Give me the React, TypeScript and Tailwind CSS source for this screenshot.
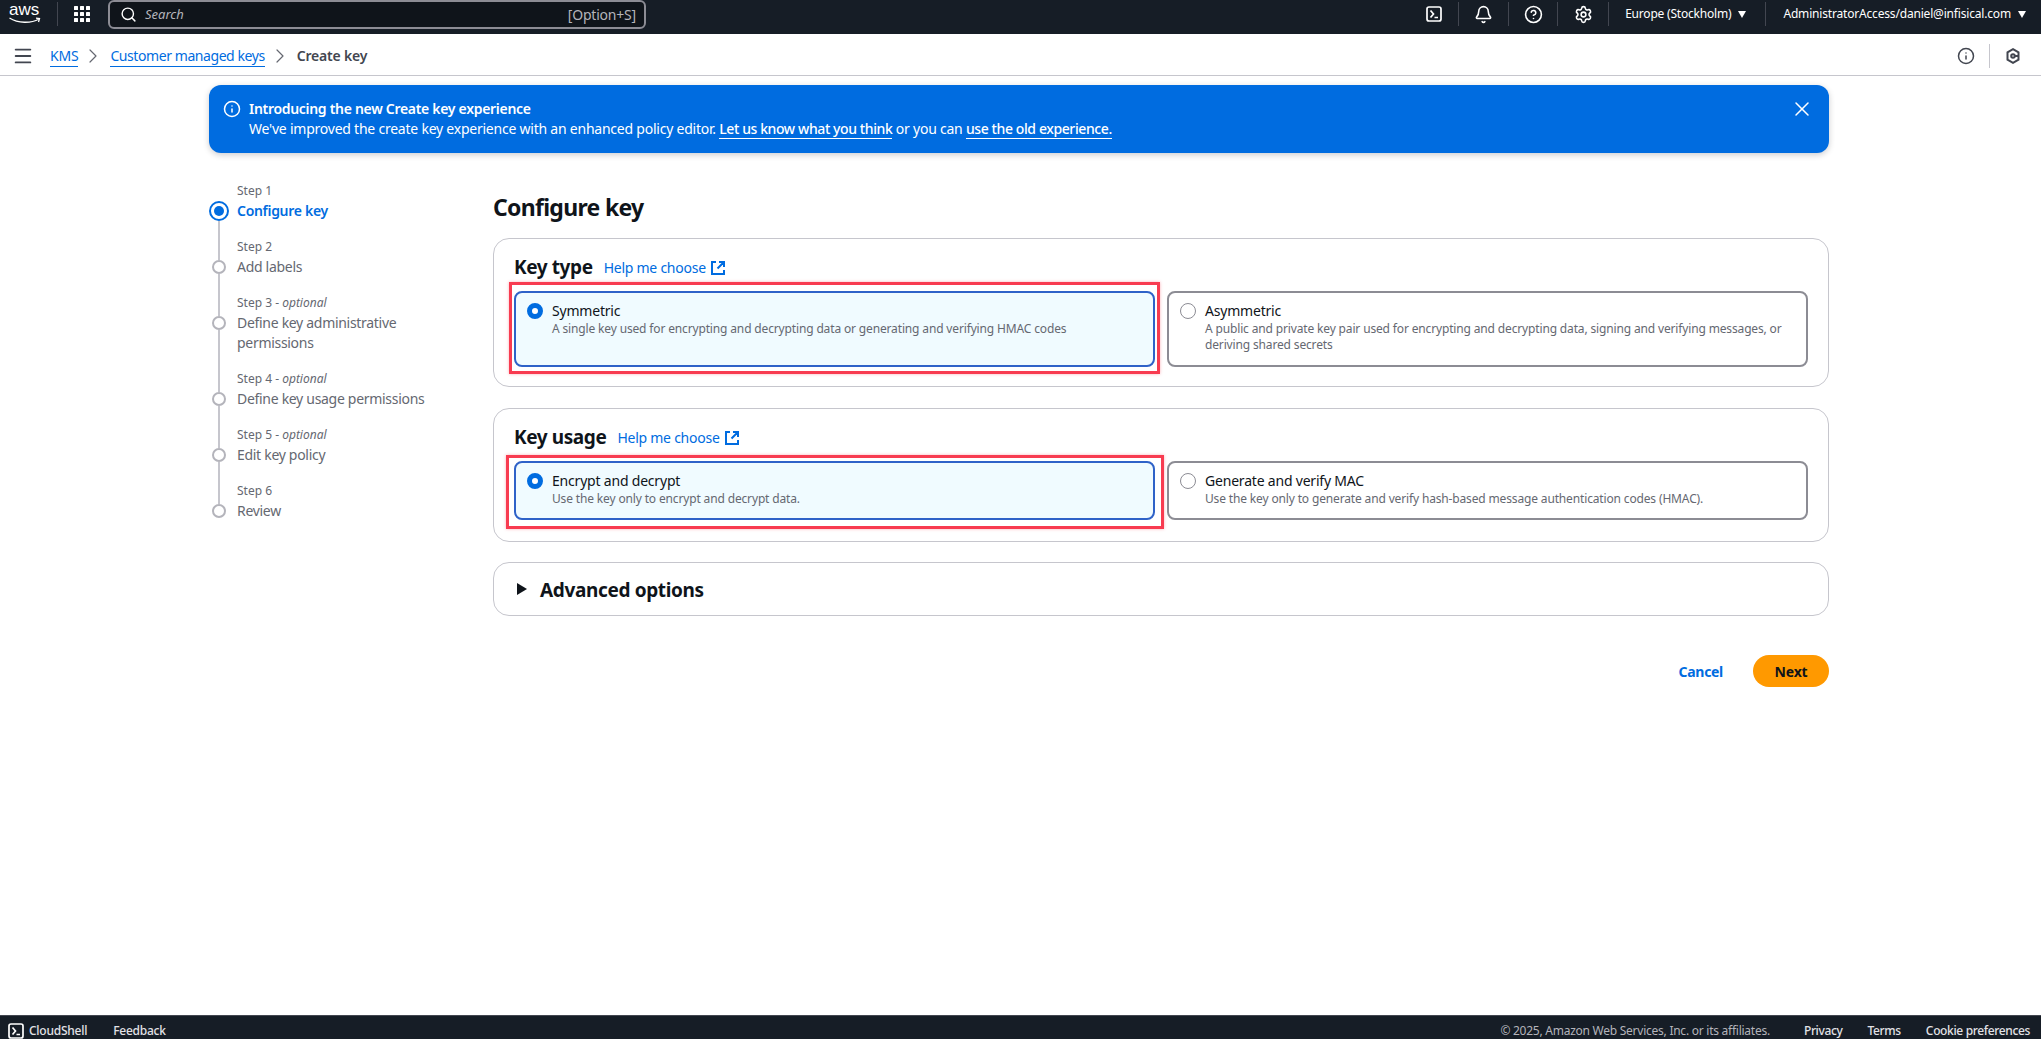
import { Bell, CircleHelp, Info, Menu, Search, Settings, X, ChevronRight } from "lucide-react";
import type { ReactNode } from "react";

const steps = [
  { label: "Step 1", title: "Configure key", active: true },
  { label: "Step 2", title: "Add labels" },
  { label: "Step 3", optional: true, title: "Define key administrative permissions" },
  { label: "Step 4", optional: true, title: "Define key usage permissions" },
  { label: "Step 5", optional: true, title: "Edit key policy" },
  { label: "Step 6", title: "Review" },
];

const Terminal = ({ className }: { className: string }) => (
  <svg viewBox="0 0 16 16" className={className} fill="none" stroke="currentColor" strokeWidth="1.7">
    <rect x="1" y="1" width="14" height="14" rx="2" />
    <path d="M4.500 4.500 7.500 8l-3 3.500M8.500 11.500H12" />
  </svg>
);

const ExternalIcon = () => (
  <svg viewBox="0 0 16 16" className="w-4 h-4" fill="none" stroke="currentColor" strokeWidth="2">
    <path d="M6 2H2v12h12v-4M9 2h5v5M14 2 7.500 8.500" />
  </svg>
);

const Caret = () => (
  <svg viewBox="0 0 8 7" className="w-2 h-[7px] ml-[7px]" fill="white">
    <path d="M0 0h8L4 7Z" />
  </svg>
);

const Sep = ({ className }: { className: string }) => <div className={"w-px h-[24px] bg-[#424650] " + className} />;

const Radio = ({ checked }: { checked?: boolean }) =>
  checked ? (
    <span className="w-4 h-4 shrink-0 mt-[2px] rounded-full border-[5px] border-[#006ce0] bg-white" />
  ) : (
    <span className="w-4 h-4 shrink-0 mt-[2px] rounded-full border-[1.5px] border-[#8c8c94] bg-white" />
  );

const Tile = ({ title, desc, checked, children }: { title: string; desc: string; checked?: boolean; children?: ReactNode }) => (
  <div
    className={
      checked
        ? "relative flex gap-[9px] rounded-lg border-2 border-[#2f62c8] bg-[#f0fbff] pl-[11px] pr-3 pt-[8px] pb-[10px]"
        : "relative flex gap-[9px] rounded-lg border-2 border-[#8c8c94] bg-white pl-[11px] pr-3 pt-[8px] pb-[10px]"
    }
  >
    <Radio checked={checked} />
    <div>
      <div className="text-[14px] leading-5 text-[#0f141a]">{title}</div>
      <div className="text-[12px] leading-4 tracking-[-0.15px] text-[#656871]">{desc}</div>
    </div>
    {children}
  </div>
);

const HelpLink = () => (
  <a className="flex items-center gap-[4px] text-[14px] leading-5 tracking-[-0.25px] text-[#006ce0] mt-[2px]">
    Help me choose
    <ExternalIcon />
  </a>
);

const App = () => {
  return (
    <div className="h-[1039px] overflow-hidden bg-white font-['Noto_Sans',sans-serif] tracking-[-0.2px] text-[#0f141a]">
      {/* top nav */}
      <header className="h-[34px] bg-[#161d26] flex items-center pb-[6px] text-white">
        <div className="relative w-[57px] h-full shrink-0">
          <span className="absolute left-[9px] top-0 font-['Liberation_Sans',sans-serif] text-[17px] leading-5 tracking-normal">aws</span>
          <svg viewBox="0 0 32 8" className="absolute left-[9px] top-[17px] w-[32px] h-[8px]" fill="none" stroke="white" strokeWidth="1.3">
            <path d="M.5 1C9 6.500 22 6.500 30 2M27 1.200 30.500 1.500 29.500 5" />
          </svg>
        </div>
        <Sep className="" />
        <svg viewBox="0 0 16 16" className="w-[16px] h-[16px] ml-[16px]" fill="white">
          <rect x="0" y="0" width="4" height="4" rx=".5" />
          <rect x="6" y="0" width="4" height="4" rx=".5" />
          <rect x="12" y="0" width="4" height="4" rx=".5" />
          <rect x="0" y="6" width="4" height="4" rx=".5" />
          <rect x="6" y="6" width="4" height="4" rx=".5" />
          <rect x="12" y="6" width="4" height="4" rx=".5" />
          <rect x="0" y="12" width="4" height="4" rx=".5" />
          <rect x="6" y="12" width="4" height="4" rx=".5" />
          <rect x="12" y="12" width="4" height="4" rx=".5" />
        </svg>
        <div className="ml-[18px] w-[538px] h-[29px] self-start flex items-center rounded-md border-2 border-[#8c8c94] bg-[#0f141a] pl-[10px] pr-[8px]">
          <Search className="w-[17px] h-[17px] text-white" strokeWidth={2} />
          <span className="ml-[8px] text-[13px] italic tracking-normal text-[#b4b4bb]">Search</span>
          <span className="ml-auto text-[14px] text-[#b4b4bb]">[Option+S]</span>
        </div>
        <div className="ml-auto flex items-center h-full pr-[15px]">
          <Terminal className="w-4 h-4 text-white" />
          <Sep className="ml-[16px]" />
          <Bell className="w-[19px] h-[19px] ml-[15px]" strokeWidth={2} />
          <Sep className="ml-[15px]" />
          <CircleHelp className="w-[19px] h-[19px] ml-[15px]" strokeWidth={2} />
          <Sep className="ml-[14px]" />
          <Settings className="w-[19px] h-[19px] ml-[16px]" strokeWidth={2} />
          <Sep className="ml-[15px]" />
          <span className="ml-[16px] text-[12px]">Europe (Stockholm)</span>
          <Caret />
          <Sep className="ml-[19px]" />
          <span className="ml-[17px] text-[12px] tracking-[-0.18px]">AdministratorAccess/daniel@infisical.com</span>
          <Caret />
        </div>
      </header>

      {/* breadcrumbs */}
      <div className="h-[42px] border-b border-[#c6c6cd] flex items-center pt-[2px] pl-[12px] pr-[20px] text-[14px]">
        <Menu className="w-[22px] h-[22px] text-[#424650]" strokeWidth={2} />
        <a className="ml-[16px] text-[#006ce0] border-b border-[#006ce0]">KMS</a>
        <ChevronRight className="w-6 h-6 ml-[3px] text-[#656871]" strokeWidth={1.2} />
        <a className="ml-[5px] tracking-[-0.43px] text-[#006ce0] border-b border-[#006ce0]">Customer managed keys</a>
        <ChevronRight className="w-6 h-6 ml-[3px] text-[#656871]" strokeWidth={1.2} />
        <span className="ml-[5px] font-semibold tracking-[-0.2px] text-[#424650]">Create key</span>
        <div className="ml-auto flex items-center">
          <Info className="w-[18px] h-[18px] text-[#424650]" strokeWidth={2} />
          <div className="w-px h-[24px] bg-[#c6c6cd] ml-[14px]" />
          <svg viewBox="0 0 16 16" className="w-4 h-4 ml-[15px] text-[#424650]" fill="none" stroke="currentColor" strokeWidth="2">
            <path d="M8 1.200 13.500 4.300v7.400L8 14.800 2.500 11.700V4.300Z" />
            <circle cx="8" cy="8" r="1.800" />
            <path d="M9.500 8h4" />
          </svg>
        </div>
      </div>

      {/* content */}
      <main className="h-[939px] pt-[9px] pl-[209px] pr-[212px]">
        <div className="h-[68px] rounded-xl bg-[#006ce0] text-white flex pl-[14px] pr-[15px] pt-[14px] text-[14px] leading-5 shadow-[0_2px_6px_rgba(0,7,22,0.2)]">
          <Info className="w-[18px] h-[18px] mt-[1px] shrink-0" strokeWidth={2} />
          <div className="ml-[8px]">
            <div className="font-semibold tracking-[-0.3px]">Introducing the new Create key experience</div>
            <div className="tracking-[-0.23px]">
              We've improved the create key experience with an enhanced policy editor.{" "}
              <a className="font-medium tracking-[-0.4px] border-b border-white">Let us know what you think</a> or you can{" "}
              <a className="font-medium tracking-[-0.4px] border-b border-white">use the old experience.</a>
            </div>
          </div>
          <X className="w-6 h-6 ml-auto shrink-0 -mt-[2px]" strokeWidth={1.5} />
        </div>

        <div className="flex pt-[28px]">
          {/* wizard steps */}
          <ol className="w-[284px] shrink-0">
            {steps.map((step, i) => (
              <li key={step.label} className="flex gap-2">
                <div className="w-5 shrink-0 flex flex-col items-center">
                  {step.active ? (
                    <>
                      <div className="h-5" />
                      <span className="w-5 h-5 rounded-full border-2 border-[#006ce0] p-[3px]">
                        <span className="block w-full h-full rounded-full bg-[#006ce0]" />
                      </span>
                    </>
                  ) : (
                    <>
                      <div className="h-[23px] w-[2px] bg-[#c6c6cd]" />
                      <span className="w-[14px] h-[14px] rounded-full border-2 border-[#b4b4bb] shrink-0" />
                    </>
                  )}
                  {i < steps.length - 1 && <div className="flex-1 w-[2px] bg-[#c6c6cd]" />}
                </div>
                <div className="pb-4 w-[220px]">
                  <div className="text-[12px] leading-5 tracking-normal text-[#656871]">
                    {step.label}
                    {step.optional && (
                      <>
                        {" - "}
                        <i>optional</i>
                      </>
                    )}
                  </div>
                  <div
                    className={
                      step.active
                        ? "text-[14px] leading-5 font-semibold tracking-[-0.3px] text-[#006ce0]"
                        : "text-[14px] leading-5 tracking-[-0.3px] text-[#656871]"
                    }
                  >
                    {step.title}
                  </div>
                </div>
              </li>
            ))}
          </ol>

          {/* form */}
          <div className="flex-1 pt-[11px]">
            <h1 className="text-[23px] leading-[30px] font-bold tracking-[-0.7px] mb-[16px]">Configure key</h1>

            <section className="rounded-2xl border border-[#c6c6cd] px-5 pt-4 pb-[19px]">
              <div className="flex gap-[11px] mb-[12px]">
                <h2 className="text-[19px] leading-6 font-bold tracking-[-0.4px]">Key type</h2>
                <HelpLink />
              </div>
              <div className="grid grid-cols-2 gap-3 min-h-[76px]">
                <Tile
                  checked
                  title="Symmetric"
                  desc="A single key used for encrypting and decrypting data or generating and verifying HMAC codes"
                >
                  <div className="absolute -left-[7px] -right-[7px] -top-[11px] -bottom-[9px] border-[3px] border-[#f83b50] shadow-[0_0_3px_rgba(248,59,80,0.4)] pointer-events-none" />
                </Tile>
                <Tile
                  title="Asymmetric"
                  desc="A public and private key pair used for encrypting and decrypting data, signing and verifying messages, or deriving shared secrets"
                />
              </div>
            </section>

            <section className="mt-[21px] rounded-2xl border border-[#c6c6cd] px-5 pt-4 pb-[21px]">
              <div className="flex gap-[11px] mb-[12px]">
                <h2 className="text-[19px] leading-6 font-bold tracking-[-0.4px]">Key usage</h2>
                <HelpLink />
              </div>
              <div className="grid grid-cols-2 gap-3 min-h-[59px]">
                <Tile checked title="Encrypt and decrypt" desc="Use the key only to encrypt and decrypt data.">
                  <div className="absolute -left-[10px] -right-[11px] -top-[8px] -bottom-[11px] border-[3px] border-[#f83b50] shadow-[0_0_3px_rgba(248,59,80,0.4)] pointer-events-none" />
                </Tile>
                <Tile
                  title="Generate and verify MAC"
                  desc="Use the key only to generate and verify hash-based message authentication codes (HMAC)."
                />
              </div>
            </section>

            <section className="mt-5 h-[54px] rounded-2xl border border-[#c6c6cd] flex items-center pl-[23px]">
              <svg viewBox="0 0 10 12" className="w-[10px] h-[12px]" fill="#0f141a">
                <path d="M0 0 10 6 0 12Z" />
              </svg>
              <span className="ml-[13px] text-[19px] leading-6 font-bold tracking-[-0.35px] pt-[2px]">Advanced options</span>
            </section>

            <div className="mt-[39px] flex items-center justify-end gap-[30px]">
              <a className="text-[14px] font-bold tracking-[-0.3px] text-[#006ce0]">Cancel</a>
              <button className="w-[76px] h-8 rounded-full bg-[#ff9900] text-[14px] font-bold text-[#0f141a]">Next</button>
            </div>
          </div>
        </div>
      </main>

      {/* footer */}
      <footer className="h-[30px] bg-[#161d26] border-t border-[#424650] flex items-center pl-[8px] pr-[11px] text-[12px] tracking-[-0.25px] text-[#e2e2e6]">
        <Terminal className="w-4 h-4 text-white" />
        <span className="ml-[5px] font-medium">CloudShell</span>
        <span className="ml-[26px] font-medium">Feedback</span>
        <span className="ml-auto text-[#b4b4bb]">© 2025, Amazon Web Services, Inc. or its affiliates.</span>
        <span className="ml-[34px] font-medium tracking-[-0.35px]">Privacy</span>
        <span className="ml-[25px] font-medium tracking-[-0.35px]">Terms</span>
        <span className="ml-[25px] font-medium tracking-[-0.35px]">Cookie preferences</span>
      </footer>
    </div>
  );
};

export default App;
